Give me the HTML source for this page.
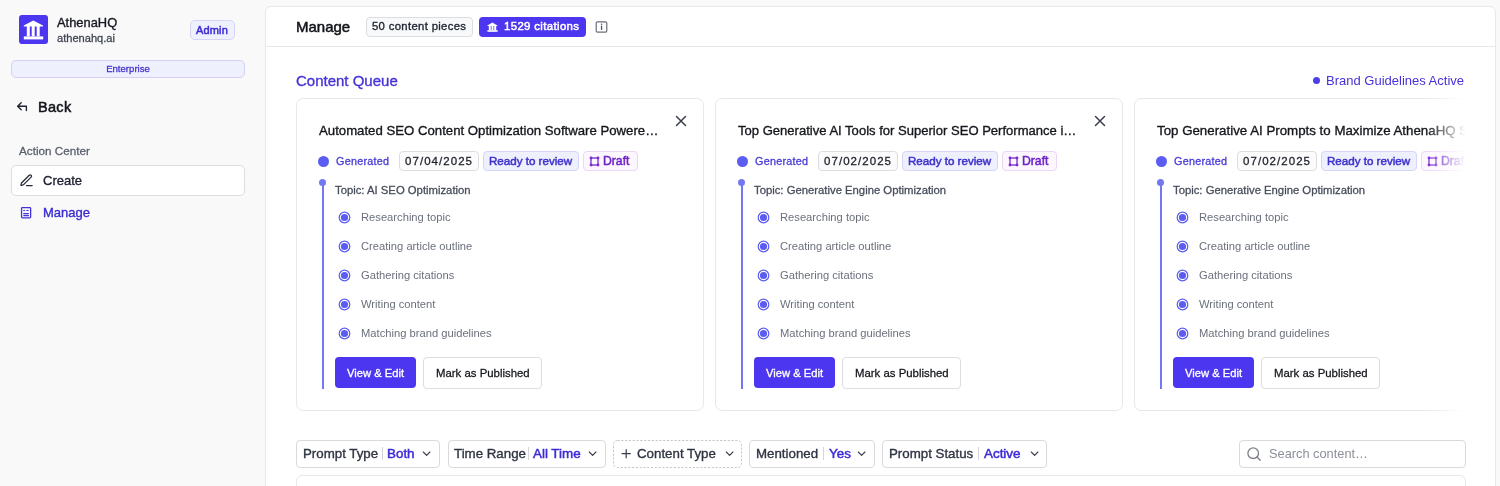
<!DOCTYPE html>
<html><head><meta charset="utf-8"><style>
html,body{margin:0;padding:0;width:1500px;height:486px;overflow:hidden;background:#f9f9fa;font-family:"Liberation Sans", sans-serif}
.t{position:absolute;white-space:nowrap;will-change:transform}
.b{position:absolute}
</style></head><body>
<div class="b" style="left:19px;top:15px;width:29px;height:29px;background:#4c36f0;border-radius:3px"></div>
<svg class="b" style="left:19px;top:15px" width="29" height="29" viewBox="0 0 29 29"><path d="M14.3 5.4 L24 10.6 L24 11.4 L4.8 11.4 L4.8 10.6 Z" fill="#fff"/><rect x="7.8" y="11" width="3" height="10.4" fill="#fff"/><rect x="12.7" y="11" width="3" height="10.4" fill="#fff"/><rect x="17.7" y="11" width="3" height="10.4" fill="#fff"/><rect x="4.8" y="21.4" width="19.4" height="3" fill="#fff"/></svg>
<div class="t" style="left:57.00px;top:16.98px;font-size:12.9px;line-height:12.9px;font-weight:400;color:#151820;;-webkit-text-stroke:0.35px #151820">AthenaHQ</div>
<div class="t" style="left:57.00px;top:33.30px;font-size:11.1px;line-height:11.1px;font-weight:400;color:#3f4450;;-webkit-text-stroke:0.28px #3f4450">athenahq.ai</div>
<div class="b" style="left:190px;top:20px;width:45px;height:20px;box-sizing:border-box;border:1px solid #d6d4f5;background:#eef0fe;border-radius:5px"></div>
<div class="t" style="left:196.00px;top:24.69px;font-size:11.0px;line-height:11.0px;font-weight:400;color:#3d2bd6;letter-spacing:0.15px;-webkit-text-stroke:0.5px #3d2bd6">Admin</div>
<div class="b" style="left:11px;top:60px;width:234px;height:18px;box-sizing:border-box;border:1px solid #d3d0f3;background:#eef0fe;border-radius:5px"></div>
<div class="t" style="left:11.00px;top:63.77px;font-size:9.6px;line-height:9.6px;font-weight:400;color:#4634cc;width:234px;text-align:center;-webkit-text-stroke:0.3px #4634cc">Enterprise</div>
<svg class="b" style="left:16px;top:101px" width="12" height="11" viewBox="0 0 12 11"><path d="M5.2 1.8 L1.6 5.2 L5.2 8.7 M1.8 5.2 H10.4 V9.6" fill="none" stroke="#1f2330" stroke-width="1.35" stroke-linecap="round" stroke-linejoin="round"/></svg>
<div class="t" style="left:37.60px;top:100.43px;font-size:14.5px;line-height:14.5px;font-weight:400;color:#121418;letter-spacing:0.3px;-webkit-text-stroke:0.5px #121418">Back</div>
<div class="t" style="left:19.00px;top:144.70px;font-size:11.7px;line-height:11.7px;font-weight:400;color:#5a5f6b;;-webkit-text-stroke:0.28px #5a5f6b">Action Center</div>
<div class="b" style="left:11px;top:165px;width:234px;height:31px;box-sizing:border-box;border:1px solid #dddddf;background:#fff;border-radius:5px"></div>
<svg class="b" style="left:18.6px;top:172.9px" width="15" height="15" viewBox="0 0 24 24"><path d="M12 20h9" fill="none" stroke="#262a36" stroke-width="2" stroke-linecap="round"/><path d="M16.376 3.622a1 1 0 0 1 3.002 3.002L7.368 18.635a2 2 0 0 1-.855.506l-2.872.838a.5.5 0 0 1-.62-.62l.838-2.872a2 2 0 0 1 .506-.854z" fill="none" stroke="#262a36" stroke-width="2" stroke-linejoin="round"/></svg>
<div class="t" style="left:42.50px;top:173.80px;font-size:13px;line-height:13px;font-weight:400;color:#1d2130;;-webkit-text-stroke:0.35px #1d2130">Create</div>
<svg class="b" style="left:20px;top:206px" width="12" height="13" viewBox="0 0 12 13"><rect x="1.55" y="1.65" width="9.1" height="10.2" rx="0.8" fill="none" stroke="#4433d8" stroke-width="1.3"/><circle cx="4.1" cy="4.5" r="0.85" fill="#4433d8"/><path d="M6.3 4.5 H8.6 M3.3 7.6 H8.9 M3.3 9.6 H8.9" stroke="#4433d8" stroke-width="1.1"/></svg>
<div class="t" style="left:42.50px;top:206.40px;font-size:13px;line-height:13px;font-weight:400;color:#3a2bcf;;-webkit-text-stroke:0.35px #3a2bcf">Manage</div>
<div class="b" style="left:265px;top:6px;width:1231px;height:490px;box-sizing:border-box;border:1px solid #e8e8e8;background:#fff;border-radius:6px"></div>
<div class="b" style="left:266px;top:46px;width:1229px;height:1px;background:#e8e8e8"></div>
<div class="t" style="left:296.00px;top:19.20px;font-size:15.0px;line-height:15.0px;font-weight:400;color:#111318;;-webkit-text-stroke:0.5px #111318">Manage</div>
<div class="b" style="left:366px;top:17px;width:107px;height:20px;box-sizing:border-box;border:1px solid #dddddf;background:#f8f9fb;border-radius:4px"></div>
<div class="t" style="left:372.00px;top:21.33px;font-size:11.3px;line-height:11.3px;font-weight:400;color:#1f2430;letter-spacing:0.34px;-webkit-text-stroke:0.35px #1f2430">50 content pieces</div>
<div class="b" style="left:479px;top:17px;width:107px;height:20px;background:#4c36f0;border-radius:4px"></div>
<svg class="b" style="left:487px;top:22px" width="11" height="10" viewBox="0 0 11 10"><path d="M5.4 0.6 L10.4 3.4 V4 H0.4 V3.4 Z" fill="#fff"/><rect x="1.8" y="3.8" width="2" height="4.6" fill="#fff"/><rect x="4.5" y="3.8" width="2" height="4.6" fill="#fff"/><rect x="7.2" y="3.8" width="2" height="4.6" fill="#fff"/><rect x="0.4" y="8.2" width="10.2" height="1.6" fill="#fff"/></svg>
<div class="t" style="left:503.50px;top:21.15px;font-size:11.4px;line-height:11.4px;font-weight:400;color:#fff;letter-spacing:0.36px;-webkit-text-stroke:0.5px #fff">1529 citations</div>
<svg class="b" style="left:595px;top:21px" width="13" height="12" viewBox="0 0 13 12"><rect x="1.2" y="0.9" width="10.6" height="10.2" rx="1.3" fill="none" stroke="#6b6f7a" stroke-width="1.2"/><rect x="5.9" y="4.6" width="1.3" height="4.3" fill="#50545f"/><rect x="5.9" y="2.6" width="1.3" height="1.2" fill="#50545f"/></svg>
<div class="t" style="left:296.00px;top:73.10px;font-size:15px;line-height:15px;font-weight:400;color:#4632d8;;-webkit-text-stroke:0.35px #4632d8">Content Queue</div>
<div class="b" style="left:1313px;top:77px;width:7px;height:7px;background:#4c3fe6;border-radius:50%"></div>
<div class="t" style="left:1326.00px;top:74.30px;font-size:13px;line-height:13px;font-weight:400;color:#4632d8;">Brand Guidelines Active</div>
<div class="b" style="left:266px;top:90px;width:1204px;height:330px;overflow:hidden">
<div class="b" style="left:-266px;top:-90px;width:1500px;height:486px">
<div class="b" style="left:296px;top:98px;width:408px;height:313px;box-sizing:border-box;border:1px solid #e8e8e8;background:#fff;border-radius:7px"></div>
<div class="t" style="left:319.00px;top:123.63px;font-size:13.2px;line-height:13.2px;font-weight:400;color:#15171d;;-webkit-text-stroke:0.35px #15171d">Automated SEO Content Optimization Software Powere…</div>
<svg class="b" style="left:675px;top:115px" width="12" height="12" viewBox="0 0 12 12"><path d="M1.5 1.5 L10.5 10.5 M10.5 1.5 L1.5 10.5" stroke="#3a3e4c" stroke-width="1.5" stroke-linecap="round"/></svg>
<div class="b" style="left:318px;top:155.5px;width:11px;height:11px;background:#5b5cf2;border-radius:50%"></div>
<div class="t" style="left:336.20px;top:155.56px;font-size:10.8px;line-height:10.8px;font-weight:400;color:#4a3bd6;letter-spacing:0.25px;-webkit-text-stroke:0.3px #4a3bd6">Generated</div>
<div class="b" style="left:399px;top:151px;width:80px;height:20px;box-sizing:border-box;border:1px solid #dddddf;background:#fbfbfc;border-radius:4px"></div>
<div class="t" style="left:404.50px;top:155.97px;font-size:11.5px;line-height:11.5px;font-weight:400;color:#1c2029;letter-spacing:1.05px;-webkit-text-stroke:0.28px #1c2029">07/04/2025</div>
<div class="b" style="left:483px;top:151px;width:96px;height:20px;box-sizing:border-box;border:1px solid #d5d6f7;background:#eef0fe;border-radius:4px"></div>
<div class="t" style="left:488.50px;top:155.18px;font-size:11.6px;line-height:11.6px;font-weight:400;color:#3f32cc;;-webkit-text-stroke:0.5px #3f32cc">Ready to review</div>
<div class="b" style="left:583px;top:151px;width:55px;height:20px;box-sizing:border-box;border:1px solid #ecd5f7;background:#fcf7fe;border-radius:4px"></div>
<svg class="b" style="left:589px;top:155.6px" width="11" height="11" viewBox="0 0 11 11"><rect x="2" y="2" width="7" height="7" fill="none" stroke="#7a2ad0" stroke-width="1.3"/><circle cx="2" cy="2" r="1.4" fill="#7a2ad0"/><circle cx="9" cy="2" r="1.4" fill="#7a2ad0"/><circle cx="2" cy="9" r="1.4" fill="#7a2ad0"/><circle cx="9" cy="9" r="1.4" fill="#7a2ad0"/></svg>
<div class="t" style="left:603.00px;top:155.17px;font-size:12.2px;line-height:12.2px;font-weight:400;color:#6d22c8;;-webkit-text-stroke:0.5px #6d22c8">Draft</div>
<div class="b" style="left:321.5px;top:181px;width:2.4px;height:208px;background:#7378f0"></div>
<div class="b" style="left:319.2px;top:179.2px;width:7px;height:7px;background:#7378f0;border-radius:50%"></div>
<div class="t" style="left:334.50px;top:184.73px;font-size:11.3px;line-height:11.3px;font-weight:400;color:#464c5a;;-webkit-text-stroke:0.28px #464c5a">Topic: AI SEO Optimization</div>
<svg class="b" style="left:337.5px;top:210.70px" width="13" height="13" viewBox="0 0 13 13"><circle cx="6.5" cy="6.5" r="5.3" fill="none" stroke="#5b5cf2" stroke-width="1.2"/><circle cx="6.5" cy="6.5" r="3.6" fill="#5b5cf2"/></svg>
<div class="t" style="left:360.50px;top:211.52px;font-size:11.2px;line-height:11.2px;font-weight:400;color:#6b707c;">Researching topic</div>
<svg class="b" style="left:337.5px;top:239.75px" width="13" height="13" viewBox="0 0 13 13"><circle cx="6.5" cy="6.5" r="5.3" fill="none" stroke="#5b5cf2" stroke-width="1.2"/><circle cx="6.5" cy="6.5" r="3.6" fill="#5b5cf2"/></svg>
<div class="t" style="left:360.50px;top:240.57px;font-size:11.2px;line-height:11.2px;font-weight:400;color:#6b707c;">Creating article outline</div>
<svg class="b" style="left:337.5px;top:268.80px" width="13" height="13" viewBox="0 0 13 13"><circle cx="6.5" cy="6.5" r="5.3" fill="none" stroke="#5b5cf2" stroke-width="1.2"/><circle cx="6.5" cy="6.5" r="3.6" fill="#5b5cf2"/></svg>
<div class="t" style="left:360.50px;top:269.62px;font-size:11.2px;line-height:11.2px;font-weight:400;color:#6b707c;">Gathering citations</div>
<svg class="b" style="left:337.5px;top:297.85px" width="13" height="13" viewBox="0 0 13 13"><circle cx="6.5" cy="6.5" r="5.3" fill="none" stroke="#5b5cf2" stroke-width="1.2"/><circle cx="6.5" cy="6.5" r="3.6" fill="#5b5cf2"/></svg>
<div class="t" style="left:360.50px;top:298.67px;font-size:11.2px;line-height:11.2px;font-weight:400;color:#6b707c;">Writing content</div>
<svg class="b" style="left:337.5px;top:326.90px" width="13" height="13" viewBox="0 0 13 13"><circle cx="6.5" cy="6.5" r="5.3" fill="none" stroke="#5b5cf2" stroke-width="1.2"/><circle cx="6.5" cy="6.5" r="3.6" fill="#5b5cf2"/></svg>
<div class="t" style="left:360.50px;top:327.72px;font-size:11.2px;line-height:11.2px;font-weight:400;color:#6b707c;">Matching brand guidelines</div>
<div class="b" style="left:335px;top:357px;width:81px;height:31px;background:#4c36f0;border-radius:4px"></div>
<div class="t" style="left:346.50px;top:367.92px;font-size:11.2px;line-height:11.2px;font-weight:400;color:#fff;;-webkit-text-stroke:0.3px #fff">View &amp; Edit</div>
<div class="b" style="left:423px;top:357px;width:119px;height:32px;box-sizing:border-box;border:1px solid #dddddf;background:#fff;border-radius:4px"></div>
<div class="t" style="left:435.50px;top:367.75px;font-size:11.4px;line-height:11.4px;font-weight:400;color:#15171d;;-webkit-text-stroke:0.28px #15171d">Mark as Published</div>
<div class="b" style="left:715px;top:98px;width:408px;height:313px;box-sizing:border-box;border:1px solid #e8e8e8;background:#fff;border-radius:7px"></div>
<div class="t" style="left:738.00px;top:123.75px;font-size:13.05px;line-height:13.05px;font-weight:400;color:#15171d;;-webkit-text-stroke:0.35px #15171d">Top Generative AI Tools for Superior SEO Performance i…</div>
<svg class="b" style="left:1094px;top:115px" width="12" height="12" viewBox="0 0 12 12"><path d="M1.5 1.5 L10.5 10.5 M10.5 1.5 L1.5 10.5" stroke="#3a3e4c" stroke-width="1.5" stroke-linecap="round"/></svg>
<div class="b" style="left:737px;top:155.5px;width:11px;height:11px;background:#5b5cf2;border-radius:50%"></div>
<div class="t" style="left:755.20px;top:155.56px;font-size:10.8px;line-height:10.8px;font-weight:400;color:#4a3bd6;letter-spacing:0.25px;-webkit-text-stroke:0.3px #4a3bd6">Generated</div>
<div class="b" style="left:818px;top:151px;width:80px;height:20px;box-sizing:border-box;border:1px solid #dddddf;background:#fbfbfc;border-radius:4px"></div>
<div class="t" style="left:823.50px;top:155.97px;font-size:11.5px;line-height:11.5px;font-weight:400;color:#1c2029;letter-spacing:1.05px;-webkit-text-stroke:0.28px #1c2029">07/02/2025</div>
<div class="b" style="left:902px;top:151px;width:96px;height:20px;box-sizing:border-box;border:1px solid #d5d6f7;background:#eef0fe;border-radius:4px"></div>
<div class="t" style="left:907.50px;top:155.18px;font-size:11.6px;line-height:11.6px;font-weight:400;color:#3f32cc;;-webkit-text-stroke:0.5px #3f32cc">Ready to review</div>
<div class="b" style="left:1002px;top:151px;width:55px;height:20px;box-sizing:border-box;border:1px solid #ecd5f7;background:#fcf7fe;border-radius:4px"></div>
<svg class="b" style="left:1008px;top:155.6px" width="11" height="11" viewBox="0 0 11 11"><rect x="2" y="2" width="7" height="7" fill="none" stroke="#7a2ad0" stroke-width="1.3"/><circle cx="2" cy="2" r="1.4" fill="#7a2ad0"/><circle cx="9" cy="2" r="1.4" fill="#7a2ad0"/><circle cx="2" cy="9" r="1.4" fill="#7a2ad0"/><circle cx="9" cy="9" r="1.4" fill="#7a2ad0"/></svg>
<div class="t" style="left:1022.00px;top:155.17px;font-size:12.2px;line-height:12.2px;font-weight:400;color:#6d22c8;;-webkit-text-stroke:0.5px #6d22c8">Draft</div>
<div class="b" style="left:740.5px;top:181px;width:2.4px;height:208px;background:#7378f0"></div>
<div class="b" style="left:738.2px;top:179.2px;width:7px;height:7px;background:#7378f0;border-radius:50%"></div>
<div class="t" style="left:753.50px;top:184.73px;font-size:11.3px;line-height:11.3px;font-weight:400;color:#464c5a;;-webkit-text-stroke:0.28px #464c5a">Topic: Generative Engine Optimization</div>
<svg class="b" style="left:756.5px;top:210.70px" width="13" height="13" viewBox="0 0 13 13"><circle cx="6.5" cy="6.5" r="5.3" fill="none" stroke="#5b5cf2" stroke-width="1.2"/><circle cx="6.5" cy="6.5" r="3.6" fill="#5b5cf2"/></svg>
<div class="t" style="left:779.50px;top:211.52px;font-size:11.2px;line-height:11.2px;font-weight:400;color:#6b707c;">Researching topic</div>
<svg class="b" style="left:756.5px;top:239.75px" width="13" height="13" viewBox="0 0 13 13"><circle cx="6.5" cy="6.5" r="5.3" fill="none" stroke="#5b5cf2" stroke-width="1.2"/><circle cx="6.5" cy="6.5" r="3.6" fill="#5b5cf2"/></svg>
<div class="t" style="left:779.50px;top:240.57px;font-size:11.2px;line-height:11.2px;font-weight:400;color:#6b707c;">Creating article outline</div>
<svg class="b" style="left:756.5px;top:268.80px" width="13" height="13" viewBox="0 0 13 13"><circle cx="6.5" cy="6.5" r="5.3" fill="none" stroke="#5b5cf2" stroke-width="1.2"/><circle cx="6.5" cy="6.5" r="3.6" fill="#5b5cf2"/></svg>
<div class="t" style="left:779.50px;top:269.62px;font-size:11.2px;line-height:11.2px;font-weight:400;color:#6b707c;">Gathering citations</div>
<svg class="b" style="left:756.5px;top:297.85px" width="13" height="13" viewBox="0 0 13 13"><circle cx="6.5" cy="6.5" r="5.3" fill="none" stroke="#5b5cf2" stroke-width="1.2"/><circle cx="6.5" cy="6.5" r="3.6" fill="#5b5cf2"/></svg>
<div class="t" style="left:779.50px;top:298.67px;font-size:11.2px;line-height:11.2px;font-weight:400;color:#6b707c;">Writing content</div>
<svg class="b" style="left:756.5px;top:326.90px" width="13" height="13" viewBox="0 0 13 13"><circle cx="6.5" cy="6.5" r="5.3" fill="none" stroke="#5b5cf2" stroke-width="1.2"/><circle cx="6.5" cy="6.5" r="3.6" fill="#5b5cf2"/></svg>
<div class="t" style="left:779.50px;top:327.72px;font-size:11.2px;line-height:11.2px;font-weight:400;color:#6b707c;">Matching brand guidelines</div>
<div class="b" style="left:754px;top:357px;width:81px;height:31px;background:#4c36f0;border-radius:4px"></div>
<div class="t" style="left:765.50px;top:367.92px;font-size:11.2px;line-height:11.2px;font-weight:400;color:#fff;;-webkit-text-stroke:0.3px #fff">View &amp; Edit</div>
<div class="b" style="left:842px;top:357px;width:119px;height:32px;box-sizing:border-box;border:1px solid #dddddf;background:#fff;border-radius:4px"></div>
<div class="t" style="left:854.50px;top:367.75px;font-size:11.4px;line-height:11.4px;font-weight:400;color:#15171d;;-webkit-text-stroke:0.28px #15171d">Mark as Published</div>
<div class="b" style="left:1134px;top:98px;width:408px;height:313px;box-sizing:border-box;border:1px solid #e8e8e8;background:#fff;border-radius:7px"></div>
<div class="t" style="left:1157.00px;top:123.54px;font-size:13.3px;line-height:13.3px;font-weight:400;color:#15171d;;-webkit-text-stroke:0.35px #15171d">Top Generative AI Prompts to Maximize AthenaHQ SEO…</div>
<svg class="b" style="left:1513px;top:115px" width="12" height="12" viewBox="0 0 12 12"><path d="M1.5 1.5 L10.5 10.5 M10.5 1.5 L1.5 10.5" stroke="#3a3e4c" stroke-width="1.5" stroke-linecap="round"/></svg>
<div class="b" style="left:1156px;top:155.5px;width:11px;height:11px;background:#5b5cf2;border-radius:50%"></div>
<div class="t" style="left:1174.20px;top:155.56px;font-size:10.8px;line-height:10.8px;font-weight:400;color:#4a3bd6;letter-spacing:0.25px;-webkit-text-stroke:0.3px #4a3bd6">Generated</div>
<div class="b" style="left:1237px;top:151px;width:80px;height:20px;box-sizing:border-box;border:1px solid #dddddf;background:#fbfbfc;border-radius:4px"></div>
<div class="t" style="left:1242.50px;top:155.97px;font-size:11.5px;line-height:11.5px;font-weight:400;color:#1c2029;letter-spacing:1.05px;-webkit-text-stroke:0.28px #1c2029">07/02/2025</div>
<div class="b" style="left:1321px;top:151px;width:96px;height:20px;box-sizing:border-box;border:1px solid #d5d6f7;background:#eef0fe;border-radius:4px"></div>
<div class="t" style="left:1326.50px;top:155.18px;font-size:11.6px;line-height:11.6px;font-weight:400;color:#3f32cc;;-webkit-text-stroke:0.5px #3f32cc">Ready to review</div>
<div class="b" style="left:1421px;top:151px;width:55px;height:20px;box-sizing:border-box;border:1px solid #ecd5f7;background:#fcf7fe;border-radius:4px"></div>
<svg class="b" style="left:1427px;top:155.6px" width="11" height="11" viewBox="0 0 11 11"><rect x="2" y="2" width="7" height="7" fill="none" stroke="#7a2ad0" stroke-width="1.3"/><circle cx="2" cy="2" r="1.4" fill="#7a2ad0"/><circle cx="9" cy="2" r="1.4" fill="#7a2ad0"/><circle cx="2" cy="9" r="1.4" fill="#7a2ad0"/><circle cx="9" cy="9" r="1.4" fill="#7a2ad0"/></svg>
<div class="t" style="left:1441.00px;top:155.17px;font-size:12.2px;line-height:12.2px;font-weight:400;color:#6d22c8;;-webkit-text-stroke:0.5px #6d22c8">Draft</div>
<div class="b" style="left:1159.5px;top:181px;width:2.4px;height:208px;background:#7378f0"></div>
<div class="b" style="left:1157.2px;top:179.2px;width:7px;height:7px;background:#7378f0;border-radius:50%"></div>
<div class="t" style="left:1172.50px;top:184.73px;font-size:11.3px;line-height:11.3px;font-weight:400;color:#464c5a;;-webkit-text-stroke:0.28px #464c5a">Topic: Generative Engine Optimization</div>
<svg class="b" style="left:1175.5px;top:210.70px" width="13" height="13" viewBox="0 0 13 13"><circle cx="6.5" cy="6.5" r="5.3" fill="none" stroke="#5b5cf2" stroke-width="1.2"/><circle cx="6.5" cy="6.5" r="3.6" fill="#5b5cf2"/></svg>
<div class="t" style="left:1198.50px;top:211.52px;font-size:11.2px;line-height:11.2px;font-weight:400;color:#6b707c;">Researching topic</div>
<svg class="b" style="left:1175.5px;top:239.75px" width="13" height="13" viewBox="0 0 13 13"><circle cx="6.5" cy="6.5" r="5.3" fill="none" stroke="#5b5cf2" stroke-width="1.2"/><circle cx="6.5" cy="6.5" r="3.6" fill="#5b5cf2"/></svg>
<div class="t" style="left:1198.50px;top:240.57px;font-size:11.2px;line-height:11.2px;font-weight:400;color:#6b707c;">Creating article outline</div>
<svg class="b" style="left:1175.5px;top:268.80px" width="13" height="13" viewBox="0 0 13 13"><circle cx="6.5" cy="6.5" r="5.3" fill="none" stroke="#5b5cf2" stroke-width="1.2"/><circle cx="6.5" cy="6.5" r="3.6" fill="#5b5cf2"/></svg>
<div class="t" style="left:1198.50px;top:269.62px;font-size:11.2px;line-height:11.2px;font-weight:400;color:#6b707c;">Gathering citations</div>
<svg class="b" style="left:1175.5px;top:297.85px" width="13" height="13" viewBox="0 0 13 13"><circle cx="6.5" cy="6.5" r="5.3" fill="none" stroke="#5b5cf2" stroke-width="1.2"/><circle cx="6.5" cy="6.5" r="3.6" fill="#5b5cf2"/></svg>
<div class="t" style="left:1198.50px;top:298.67px;font-size:11.2px;line-height:11.2px;font-weight:400;color:#6b707c;">Writing content</div>
<svg class="b" style="left:1175.5px;top:326.90px" width="13" height="13" viewBox="0 0 13 13"><circle cx="6.5" cy="6.5" r="5.3" fill="none" stroke="#5b5cf2" stroke-width="1.2"/><circle cx="6.5" cy="6.5" r="3.6" fill="#5b5cf2"/></svg>
<div class="t" style="left:1198.50px;top:327.72px;font-size:11.2px;line-height:11.2px;font-weight:400;color:#6b707c;">Matching brand guidelines</div>
<div class="b" style="left:1173px;top:357px;width:81px;height:31px;background:#4c36f0;border-radius:4px"></div>
<div class="t" style="left:1184.50px;top:367.92px;font-size:11.2px;line-height:11.2px;font-weight:400;color:#fff;;-webkit-text-stroke:0.3px #fff">View &amp; Edit</div>
<div class="b" style="left:1261px;top:357px;width:119px;height:32px;box-sizing:border-box;border:1px solid #dddddf;background:#fff;border-radius:4px"></div>
<div class="t" style="left:1273.50px;top:367.75px;font-size:11.4px;line-height:11.4px;font-weight:400;color:#15171d;;-webkit-text-stroke:0.28px #15171d">Mark as Published</div>
</div>
<div class="b" style="left:1160px;top:0;width:44px;height:330px;background:linear-gradient(to right, rgba(255,255,255,0), #fff 90%)"></div>
</div>
<div class="b" style="left:296px;top:440px;width:144px;height:28px;box-sizing:border-box;border:1px solid #dadadd;background:#fff;border-radius:4px"></div>
<div class="t" style="left:302.50px;top:446.74px;font-size:13.3px;line-height:13.3px;font-weight:400;color:#2f3441;;-webkit-text-stroke:0.35px #2f3441">Prompt Type</div>
<div class="b" style="left:382px;top:447px;width:1px;height:13px;background:#d3d5da"></div>
<div class="t" style="left:386.50px;top:446.66px;font-size:13.4px;line-height:13.4px;font-weight:400;color:#3d2bd6;;-webkit-text-stroke:0.5px #3d2bd6">Both</div>
<svg class="b" style="left:422px;top:450px" width="9" height="7" viewBox="0 0 9 7"><path d="M1.3 2 L4.6 5.3 L7.9 2" fill="none" stroke="#3a3e4c" stroke-width="1.15" stroke-linecap="round" stroke-linejoin="round"/></svg>
<div class="b" style="left:448px;top:440px;width:158px;height:28px;box-sizing:border-box;border:1px solid #dadadd;background:#fff;border-radius:4px"></div>
<div class="t" style="left:453.50px;top:446.74px;font-size:13.3px;line-height:13.3px;font-weight:400;color:#2f3441;;-webkit-text-stroke:0.35px #2f3441">Time Range</div>
<div class="b" style="left:528px;top:447px;width:1px;height:13px;background:#d3d5da"></div>
<div class="t" style="left:532.50px;top:446.66px;font-size:13.4px;line-height:13.4px;font-weight:400;color:#3d2bd6;;-webkit-text-stroke:0.5px #3d2bd6">All Time</div>
<svg class="b" style="left:588px;top:450px" width="9" height="7" viewBox="0 0 9 7"><path d="M1.3 2 L4.6 5.3 L7.9 2" fill="none" stroke="#3a3e4c" stroke-width="1.15" stroke-linecap="round" stroke-linejoin="round"/></svg>
<svg class="b" style="left:613px;top:440px" width="129" height="28"><rect x="0.5" y="0.5" width="128" height="27" rx="4" fill="#fff" stroke="#c4c7cd" stroke-width="1" stroke-dasharray="2.2 1.6"/></svg>
<div class="t" style="left:637.00px;top:446.74px;font-size:13.3px;line-height:13.3px;font-weight:400;color:#2f3441;;-webkit-text-stroke:0.35px #2f3441">Content Type</div>
<svg class="b" style="left:724.5px;top:450px" width="9" height="7" viewBox="0 0 9 7"><path d="M1.3 2 L4.6 5.3 L7.9 2" fill="none" stroke="#3a3e4c" stroke-width="1.15" stroke-linecap="round" stroke-linejoin="round"/></svg>
<svg class="b" style="left:620px;top:448px" width="12" height="12" viewBox="0 0 12 12"><path d="M6.2 1.6 V9.8 M2.1 5.7 H10.3" stroke="#3a3e4c" stroke-width="1.2" stroke-linecap="round"/></svg>
<div class="b" style="left:749px;top:440px;width:126px;height:28px;box-sizing:border-box;border:1px solid #dadadd;background:#fff;border-radius:4px"></div>
<div class="t" style="left:756.00px;top:446.74px;font-size:13.3px;line-height:13.3px;font-weight:400;color:#2f3441;;-webkit-text-stroke:0.35px #2f3441">Mentioned</div>
<div class="b" style="left:823px;top:447px;width:1px;height:13px;background:#d3d5da"></div>
<div class="t" style="left:828.50px;top:446.66px;font-size:13.4px;line-height:13.4px;font-weight:400;color:#3d2bd6;;-webkit-text-stroke:0.5px #3d2bd6">Yes</div>
<svg class="b" style="left:857px;top:450px" width="9" height="7" viewBox="0 0 9 7"><path d="M1.3 2 L4.6 5.3 L7.9 2" fill="none" stroke="#3a3e4c" stroke-width="1.15" stroke-linecap="round" stroke-linejoin="round"/></svg>
<div class="b" style="left:882px;top:440px;width:165px;height:28px;box-sizing:border-box;border:1px solid #dadadd;background:#fff;border-radius:4px"></div>
<div class="t" style="left:888.50px;top:446.74px;font-size:13.3px;line-height:13.3px;font-weight:400;color:#2f3441;;-webkit-text-stroke:0.35px #2f3441">Prompt Status</div>
<div class="b" style="left:978px;top:447px;width:1px;height:13px;background:#d3d5da"></div>
<div class="t" style="left:983.50px;top:446.66px;font-size:13.4px;line-height:13.4px;font-weight:400;color:#3d2bd6;;-webkit-text-stroke:0.5px #3d2bd6">Active</div>
<svg class="b" style="left:1029.5px;top:450px" width="9" height="7" viewBox="0 0 9 7"><path d="M1.3 2 L4.6 5.3 L7.9 2" fill="none" stroke="#3a3e4c" stroke-width="1.15" stroke-linecap="round" stroke-linejoin="round"/></svg>
<div class="b" style="left:1239px;top:440px;width:227px;height:28px;box-sizing:border-box;border:1px solid #dadadd;background:#fff;border-radius:4px"></div>
<svg class="b" style="left:1246px;top:446px" width="16" height="16" viewBox="0 0 16 16"><circle cx="7.2" cy="7.2" r="5.3" fill="none" stroke="#7b7f8a" stroke-width="1.3"/><path d="M11 11 L14.2 14.2" stroke="#7b7f8a" stroke-width="1.3" stroke-linecap="round"/></svg>
<div class="t" style="left:1269.00px;top:447.66px;font-size:12.8px;line-height:12.8px;font-weight:400;color:#8b8f99;">Search content…</div>
<div class="b" style="left:296px;top:475px;width:1170px;height:30px;box-sizing:border-box;border:1px solid #e8e8e8;background:#fff;border-radius:6px"></div>
</body></html>
